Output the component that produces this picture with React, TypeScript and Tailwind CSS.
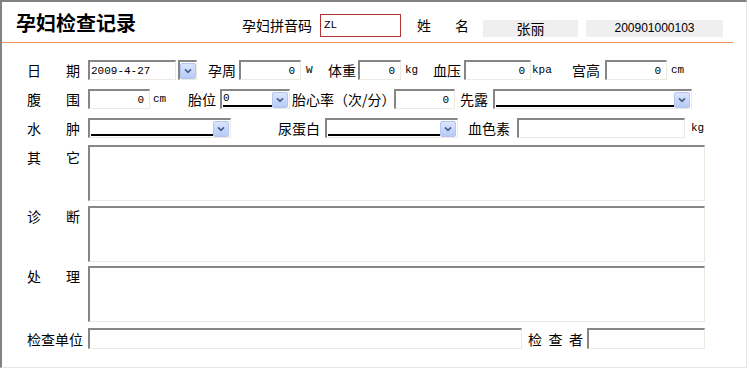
import React from "react";

const cjk = "font-['Noto_Sans_CJK_SC',sans-serif]";
const mono = "font-['Liberation_Mono','Noto_Sans_CJK_SC',monospace]";

type Kids = { className?: string; children?: React.ReactNode };

// classic sunken (inset) box used by every input
function Sunken({ className = "", children }: Kids) {
    return (
        <div
            className={`bg-white border-t-2 border-l-2 border-t-[#868686] border-l-[#868686] border-r border-b border-r-[#ebe9e0] border-b-[#ebe9e0] ${className}`}>
            {children}
        </div>
    );
}

function Field({ className = "", value = "", right = false }: { className?: string; value?: string; right?: boolean }) {
    return (
        <Sunken className={`h-[20px] flex items-center ${className}`}>
            <span className={`flex-1 text-[11px] leading-[14px] ${mono} ${right ? "text-right pr-[5px]" : "pl-[1px]"}`}>
                {value}
            </span>
        </Sunken>
    );
}

function ArrowBtn() {
    return (
        <div className="w-[16px] h-[16px] shrink-0 rounded-[2px] border border-[#b3c6f2] bg-linear-to-b from-[#dbe5fd] to-[#b8cbf6] flex items-center justify-center">
            <svg width="8" height="6" viewBox="0 0 8 6">
                <path d="M1 1.3 L4 4.3 L7 1.3" stroke="#4b5f88" strokeWidth="1.7" fill="none" />
            </svg>
        </div>
    );
}

function Select({ className = "", value = "" }: { className?: string; value?: string }) {
    return (
        <Sunken className={`h-[20px] flex items-center pl-[1px] pr-[1px] ${className}`}>
            <div className={`flex-1 h-[15px] border-b-2 border-black text-[11px] leading-[13px] ${mono}`}>{value}</div>
            <ArrowBtn />
        </Sunken>
    );
}

function Pair({ a, b }: { a: string; b: string }) {
    return (
        <div className="w-[53px] flex justify-between shrink-0">
            <span>{a}</span>
            <span>{b}</span>
        </div>
    );
}

export default function App() {
    return (
        <div className={`w-[750px] h-[370px] bg-white text-black ${cjk}`}>
            <div className="w-[747px] h-[368px] border-t-2 border-l-2 border-[#828282] border-r border-b border-r-[#e6e6e6] border-b-[#e6e6e6]">
                {/* header */}
                <div className="w-[731px] h-[41px] border-b border-[#e8935c] pl-[14px] flex items-center pt-[6px]">
                    <h1 className="text-[20px] leading-[20px] font-bold -mt-[5px]">孕妇检查记录</h1>
                    <span className="ml-[106px] text-[14px]">孕妇拼音码</span>
                    <div className={`ml-[8px] w-[81px] h-[23px] border border-[#b03434] bg-white flex items-center pl-[3px] text-[11px] ${mono}`}>
                        ZL
                    </div>
                    <span className="ml-[16px] text-[14px]">姓</span>
                    <span className="ml-[24px] text-[14px]">名</span>
                    <div className="ml-[14px] mt-[6px] w-[95px] h-[17px] bg-[#efefef] flex items-center justify-center text-[14px]">
                        张丽
                    </div>
                    <div className="ml-[8px] mt-[6px] w-[137px] h-[17px] bg-[#efefef] flex items-center justify-center text-[12px] font-['Liberation_Sans',sans-serif]">
                        200901000103
                    </div>
                </div>

                {/* form */}
                <div className="pl-[25px] text-[14px] leading-[20px]">
                    {/* row 1 */}
                    <div className="flex items-center h-[20px] mt-[17px]">
                        <Pair a="日" b="期" />
                        <Field className="ml-[8px] w-[88px]" value="2009-4-27" />
                        <Sunken className="ml-[2px] w-[19px] h-[20px] flex items-center justify-center">
                            <ArrowBtn />
                        </Sunken>
                        <span className="ml-[11px]">孕周</span>
                        <Field className="ml-[3px] w-[62px]" value="0" right />
                        <span className={`ml-[5px] w-[17px] text-[11px] ${mono}`}>W</span>
                        <span className="ml-[5px]">体重</span>
                        <Field className="ml-[2px] w-[43px]" value="0" right />
                        <span className={`ml-[4px] w-[24px] text-[11px] ${mono}`}>kg</span>
                        <span className="ml-[4px]">血压</span>
                        <Field className="ml-[3px] w-[67px]" value="0" right />
                        <span className={`ml-[1px] w-[22px] text-[11px] ${mono}`}>kpa</span>
                        <span className="ml-[18px]">宫高</span>
                        <Field className="ml-[5px] w-[62px]" value="0" right />
                        <span className={`ml-[4px] text-[11px] ${mono}`}>cm</span>
                    </div>

                    {/* row 2 */}
                    <div className="flex items-center h-[20px] mt-[9px]">
                        <Pair a="腹" b="围" />
                        <Field className="ml-[8px] w-[62px]" value="0" right />
                        <span className={`ml-[3px] w-[35px] text-[11px] ${mono}`}>cm</span>
                        <span>胎位</span>
                        <Select className="ml-[4px] w-[70px]" value="0" />
                        <span className="ml-[2px] w-[102px] whitespace-nowrap">胎心率（次/分）</span>
                        <Field className="w-[61px]" value="0" right />
                        <span className="ml-[5px]">先露</span>
                        <Select className="ml-[5px] w-[199px]" />
                    </div>

                    {/* row 3 */}
                    <div className="flex items-center h-[20px] mt-[9px]">
                        <Pair a="水" b="肿" />
                        <Select className="ml-[8px] w-[143px]" />
                        <span className="ml-[47px]">尿蛋白</span>
                        <Select className="ml-[5px] w-[133px]" />
                        <span className="ml-[10px]">血色素</span>
                        <Field className="ml-[7px] w-[168px]" />
                        <span className={`ml-[6px] text-[11px] ${mono}`}>kg</span>
                    </div>

                    {/* text areas */}
                    <div className="flex items-start mt-[7px]">
                        <div className="mt-[2px]">
                            <Pair a="其" b="它" />
                        </div>
                        <Sunken className="ml-[8px] w-[617px] h-[56px]" />
                    </div>
                    <div className="flex items-start mt-[5px]">
                        <div className="mt-[0px]">
                            <Pair a="诊" b="断" />
                        </div>
                        <Sunken className="ml-[8px] w-[617px] h-[56px]" />
                    </div>
                    <div className="flex items-start mt-[4px]">
                        <div className="mt-[0px]">
                            <Pair a="处" b="理" />
                        </div>
                        <Sunken className="ml-[8px] w-[617px] h-[56px]" />
                    </div>

                    {/* bottom row */}
                    <div className="flex items-center h-[21px] mt-[6px]">
                        <span className="w-[53px] whitespace-nowrap">检查单位</span>
                        <Field className="ml-[8px] w-[434px] h-[21px]" />
                        <div className="ml-[6px] w-[55px] flex justify-between">
                            <span>检</span>
                            <span>查</span>
                            <span>者</span>
                        </div>
                        <Field className="ml-[4px] w-[118px] h-[21px]" />
                    </div>
                </div>
            </div>
        </div>
    );
}
